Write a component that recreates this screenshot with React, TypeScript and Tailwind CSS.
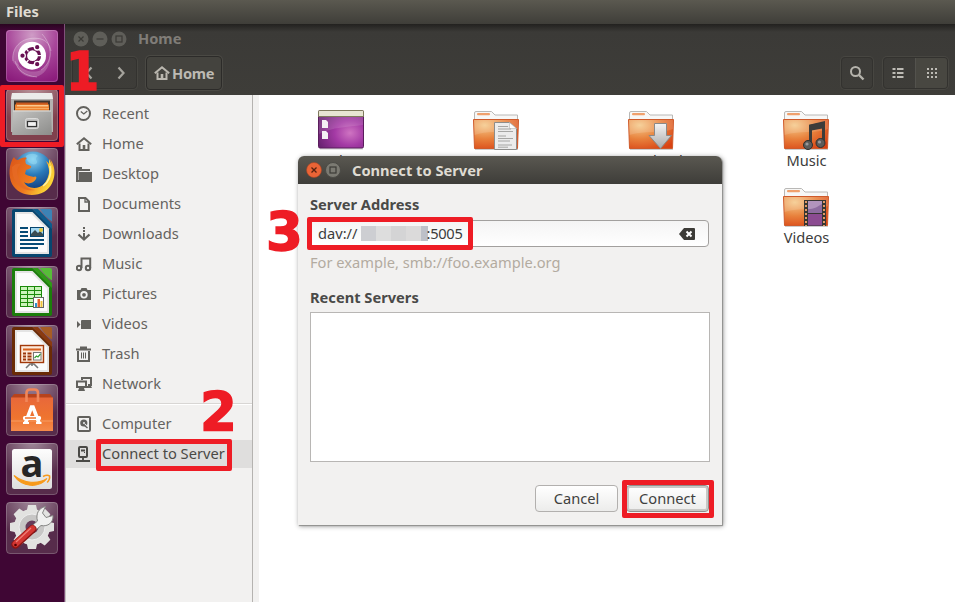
import type { ReactNode } from "react";

const ICON = "#62615d";

/* ---------- Launcher ---------- */

function Tile({ tint, children }: { tint: string; children: ReactNode }) {
  return (
    <div className={`relative h-[52px] w-[52px] shrink-0 overflow-hidden rounded-[4px] ${tint}`}>
      <svg viewBox="0 0 52 52" className="block h-[52px] w-[52px]">
        <defs>
          <radialGradient id="gloss" cx="0.5" cy="-0.05" r="0.75">
            <stop offset="0" stopColor="#fff" stopOpacity="0.45" />
            <stop offset="1" stopColor="#fff" stopOpacity="0" />
          </radialGradient>
        </defs>
        <rect width="52" height="52" fill="url(#gloss)" />
        {children}
        <rect x="0.5" y="0.5" width="51" height="51" rx="3.5" fill="none" stroke="#fff" strokeOpacity="0.2" />
      </svg>
    </div>
  );
}

function UbuntuLogo() {
  return (
    <g>
      <defs>
        <radialGradient id="dash" cx="0.5" cy="0.1" r="0.95">
          <stop offset="0" stopColor="#cf9cc6" />
          <stop offset="0.5" stopColor="#a8479a" />
          <stop offset="1" stopColor="#8b1c7c" />
        </radialGradient>
      </defs>
      <rect width="52" height="52" fill="url(#dash)" />
      <path d="M36 4c11 12 11 28-1 36-9 4-20 0-25-8C11 43 20 48 30 47 46 43 50 18 36 4Z" fill="#fff" opacity="0.2" />
      <path d="M7 32C5 17 16 5 36 9c-11 0-20 5-23 14-1 5-1 9 0 13-3-1-5-2-6-4Z" fill="#fff" opacity="0.16" />
      <g fill="none" stroke="#fff" strokeOpacity="0.3">
        <path d="M7 31C5 16 18 5 35 9c6 2 9 6 10 12" />
        <path d="M36 4c11 12 11 28-1 36" />
        <path d="M9 31c2 9 10 15 22 16" />
      </g>
      <circle cx="26" cy="25.7" r="14" fill="#fff" />
      <circle cx="26.500" cy="25.700" r="7" fill="none" stroke="#681052" strokeWidth="3.200" />
      <g fill="#681052" stroke="#fff" strokeWidth="1.300">
        <circle cx="16.500" cy="25.700" r="2.800" />
        <circle cx="31.200" cy="17.200" r="2.800" />
        <circle cx="31.200" cy="34.200" r="2.800" />
      </g>
      <path d="m22.500 21.500-3.500-4M22.500 30l-3.500 4M31 25.700h5" stroke="#fff" strokeWidth="1.200" />
    </g>
  );
}

function Cabinet() {
  return (
    <g>
      <defs>
        <linearGradient id="drawer" x1="0" y1="0" x2="1" y2="1">
          <stop offset="0" stopColor="#c4c4c2" />
          <stop offset="1" stopColor="#8c8c8a" />
        </linearGradient>
      </defs>
      <path d="M6 4h40l1 7v32H5V11Z" fill="#b5b3b1" />
      <path d="M6 4h40l1 6H5Z" fill="#ebebea" />
      <rect x="8" y="11.500" width="36" height="11" fill="#3e342e" />
      <rect x="10" y="13.500" width="32" height="4" fill="#c7571d" />
      <rect x="9" y="15.500" width="34" height="7" fill="#ee8330" />
      <path d="M11 16.800h31" stroke="#ffe5b9" />
      <path d="M10 19.500h33" stroke="#f7ac62" />
      <path d="M7 21.500h38l1 24.500H6Z" fill="url(#drawer)" />
      <path d="M7 22h38" stroke="#dededc" />
      <rect x="19.5" y="29.5" width="13" height="10" rx="2" fill="#c3c3c2" stroke="#dadad9" />
      <rect x="21.5" y="32.500" width="9" height="5" fill="#f2f2f2" stroke="#333" strokeWidth="1.2" />
    </g>
  );
}

function Firefox() {
  return (
    <g>
      <defs>
        <radialGradient id="globe" cx="0.5" cy="0.2" r="0.8">
          <stop offset="0" stopColor="#8dd6f4" />
          <stop offset="0.5" stopColor="#2879b9" />
          <stop offset="1" stopColor="#133a79" />
        </radialGradient>
        <linearGradient id="fox" x1="0" y1="0" x2="1" y2="0.5">
          <stop offset="0" stopColor="#d95319" />
          <stop offset="0.6" stopColor="#ef7b1f" />
          <stop offset="1" stopColor="#fbd536" />
        </linearGradient>
      </defs>
      <circle cx="27" cy="23" r="19.500" fill="url(#globe)" />
      <path d="M20 8c4-3 9-3 12 0-2 1-3 3-1 5 1 3-3 4-5 3-3-1-6-4-6-8Z" fill="#93d9f3" opacity="0.55" />
      <path
        d="M8 9c1 2 2 3 4 3 3-2 6-3 9-2-2 1-2 3-1 6l5 2c1 2-2 3-5 4l-1 4c3 2 6 2 9 3 2-1 3 0 2 2-2 4-8 6-12 3 3 7 14 8 20 2 6-5 7-14 2-23 3 2 4 4 5 7 1-4 0-6-1-9 8 10 5 27-6 33-11 6-26 3-32-8C2 28 3 15 8 9Z"
        fill="url(#fox)"
      />
      <path d="M40 12c5 8 4 18-3 25 9-4 12-14 8-22l-2-4v6Z" fill="#fbd43e" />
      <path d="M44 18c2 8-1 16-7 20" fill="none" stroke="#fff0a0" strokeWidth="1.5" />
      <path d="M6 19c3-3 6-4 9-3-4 3-5 8-3 12 2 8 9 13 17 14-12 2-23-6-23-23Z" fill="#e66a26" opacity="0.8" />
    </g>
  );
}

function OfficeDoc({ dark, mid, light, children }: { dark: string; mid: string; light: string; children: ReactNode }) {
  return (
    <g>
      <path d="M8 2h18.500L46 21.500V48a2 2 0 0 1-2 2H8a2 2 0 0 1-2-2V4a2 2 0 0 1 2-2Z" fill={dark} />
      <path d="M26.500 2H32l14 15v5Z" fill={mid} />
      <path d="M34 2h10a2 2 0 0 1 2 2v10.500Q39 10 34 2Z" fill={light} />
      <path d="M9 5h17.500L43 21.500V47H9Z" fill="#e4e4e4" />
      <path d="M11 7h14.500L41 22.500V45H11Z" fill="#fbfbfb" />
      {children}
    </g>
  );
}

function WriterIcon() {
  return (
    <OfficeDoc dark="#07466f" mid="#0c5c8d" light="#3c83b5">
      <path d="M14 21h8M14 25h8M14 29h8M14 33h24M14 37h24M14 41h18" stroke="#064a75" strokeWidth="2" />
      <rect x="24.5" y="20.5" width="13" height="9" fill="#a4d8f2" stroke="#07466f" />
      <path d="M25 29v-2l4-4 3 3 2-2 3 3v2Z" fill="#3a4c52" />
      <circle cx="35" cy="23" r="2" fill="#e7c93d" />
    </OfficeDoc>
  );
}

function CalcIcon() {
  return (
    <OfficeDoc dark="#1b7d0b" mid="#2f9a17" light="#57bd38">
      <rect x="14" y="20" width="22" height="21" fill="#1b8a0a" />
      <g fill="#cbf4bb">
        {[21, 25, 29, 33, 37].map((y) => (
          <g key={y}>
            <rect x="15" y={y} width="6" height="3" />
            <rect x="22" y={y} width="6" height="3" />
            <rect x="29" y={y} width="6" height="3" />
          </g>
        ))}
      </g>
      <rect x="27.5" y="31.5" width="10" height="10" fill="#fff" stroke="#666" />
      <rect x="29" y="37" width="2" height="4" fill="#2e8fc9" />
      <rect x="31.500" y="33" width="2.500" height="8" fill="#e5602a" />
      <rect x="34.500" y="35" width="2" height="6" fill="#eec339" />
    </OfficeDoc>
  );
}

function ImpressIcon() {
  return (
    <OfficeDoc dark="#6a2b06" mid="#8a3a10" light="#a75d24">
      <path d="M26 38v3m-6 2 4-4h4l4 4" fill="none" stroke="#777" strokeWidth="1.6" />
      <rect x="14.5" y="20.500" width="23" height="17" fill="#fde9d9" stroke="#a2390a" strokeWidth="1.4" />
      <path d="M17 24.500h18" stroke="#d8611f" strokeWidth="2" />
      <path d="M17 28.500h3M17 31.500h3M17 34.500h3M21.500 28.500h4M21.500 31.500h4M21.500 34.500h4" stroke="#9b370b" strokeWidth="2" />
      <rect x="27.500" y="27.500" width="7.500" height="7.500" fill="#fff" stroke="#777" />
      <path d="m28.500 33 2-2 1.500 1 2.500-3" fill="none" stroke="#35a033" strokeWidth="1.200" />
    </OfficeDoc>
  );
}

function SoftwareIcon() {
  return (
    <g>
      <defs>
        <linearGradient id="bag" x1="0" y1="0" x2="0" y2="1">
          <stop offset="0" stopColor="#e8683a" />
          <stop offset="0.6" stopColor="#ef742f" />
          <stop offset="1" stopColor="#f58a4b" />
        </linearGradient>
      </defs>
      <path d="M8 10h36l3 4H5Z" fill="#b7431c" />
      <path d="M5 13.500h42V47H5Z" fill="url(#bag)" />
      <path d="M5 37h42" stroke="#f79e65" />
      <path d="M20.500 18v-9q0-3.500 3.500-3.500h4.500q3.500 0 3.500 3.500v9" fill="none" stroke="#f0875a" strokeWidth="2.600" />
      <path d="m19.500 39 6-16h1.500l6 16" fill="none" stroke="#fff" strokeWidth="3.600" />
      <rect x="17" y="32" width="18" height="4" rx="1.500" fill="#fff" />
      <path d="M19 34h11" stroke="#ef742f" strokeWidth="1.300" />
      <path d="M17 39h6M30 39h5.500" stroke="#fff" strokeWidth="2" />
    </g>
  );
}

function AmazonIcon() {
  return (
    <g>
      <defs>
        <linearGradient id="plate" x1="0" y1="0" x2="0" y2="1">
          <stop offset="0" stopColor="#fdfdfd" />
          <stop offset="1" stopColor="#dedede" />
        </linearGradient>
      </defs>
      <rect x="6" y="6" width="40" height="40" rx="2.500" fill="url(#plate)" />
      <text x="26" y="34" textAnchor="middle" fontFamily="Open Sans, sans-serif" fontWeight="700" fontSize="38" fill="#262626">
        a
      </text>
      <path d="M8 32.500c10 8 24 9 33 3-8 10-25 9-33-3Z" fill="#f79a1c" stroke="#f79a1c" strokeWidth="1.200" />
      <path d="M37 33.500c2-1 5-1.500 6.500-.6.600 2-1 5-2.300 6.500" fill="none" stroke="#f79a1c" strokeWidth="1.600" />
    </g>
  );
}

function SettingsIcon() {
  const teeth = [0, 45, 90, 135, 180, 225, 270, 315];
  return (
    <g>
      <g fill="#e2e2e0">
        {teeth.map((a) => (
          <path key={a} d="M20.500 10 22 3h8l1.500 7Z" transform={`rotate(${a} 26 25)`} />
        ))}
        <circle cx="26" cy="25" r="18" />
      </g>
      <circle cx="26" cy="25" r="13" fill="#c7c6c5" stroke="#eee" />
      <circle cx="26" cy="25" r="6.500" fill="#663a59" />
      <path
        d="M24 25.500 31.500 19c-2-7 1-13 8-14.500l-3 6.500 3.500 4.500 7-2c.5 7-5 11.500-12 10L27.500 30Z"
        fill="#f0f0ef"
        stroke="#858583"
      />
      <path d="M9.500 42.500 26.500 27" stroke="#8c1513" strokeWidth="8" strokeLinecap="round" />
      <path d="M9.500 42 26.500 26.500" stroke="#d33632" strokeWidth="6" strokeLinecap="round" />
      <path d="M10 40 25 26" stroke="#f08078" strokeWidth="1.200" />
      <circle cx="9.500" cy="43" r="1.300" fill="#500" />
    </g>
  );
}

function Launcher() {
  const grey = "bg-[#572c4b]";
  return (
    <nav className="flex w-[65px] shrink-0 flex-col gap-[7px] border-r border-[#80507a] bg-[linear-gradient(#2a0520,#3f0634_6px)] pt-[6px] pl-[6px]">
      <Tile tint="bg-[#8b1c7c]"><UbuntuLogo /></Tile>
      <Tile tint="bg-[#80404d]"><Cabinet /></Tile>
      <Tile tint={grey}><Firefox /></Tile>
      <Tile tint={grey}><WriterIcon /></Tile>
      <Tile tint={grey}><CalcIcon /></Tile>
      <Tile tint={grey}><ImpressIcon /></Tile>
      <Tile tint={grey}><SoftwareIcon /></Tile>
      <Tile tint={grey}><AmazonIcon /></Tile>
      <Tile tint={grey}><SettingsIcon /></Tile>
    </nav>
  );
}

/* ---------- Places sidebar ---------- */

const HousePath = () => (
  <>
    <path d="m.8 8.300 7.200-6 7.200 6" strokeWidth="2" />
    <path d="M3.500 7.500V14h9V7.500" strokeWidth="2" />
    <path d="M8 9v5" strokeWidth="2.600" />
  </>
);

const glyphs: Record<string, ReactNode> = {
  Recent: (
    <>
      <circle cx="7.500" cy="7.500" r="6.500" strokeWidth="2" />
      <path d="m4.800 5.500 3 2.500 3.500-3" strokeWidth="1.300" />
    </>
  ),
  Home: <HousePath />,
  Desktop: (
    <>
      <path d="M0 1h6v2h8v2H2.500v10H0Z" fill={ICON} stroke="none" />
      <path d="M3 6h13v10H3Z" fill={ICON} stroke="none" />
      <path d="M0 14h3v2H0Z" fill={ICON} stroke="none" />
    </>
  ),
  Documents: (
    <>
      <path d="M3 2h6.500L13 5.500V15H3Z" strokeWidth="2" />
      <path d="M9 2v4h4" strokeWidth="1.300" />
    </>
  ),
  Downloads: (
    <>
      <path d="M8 1v2M8 4v2M8 7v6" strokeWidth="2" />
      <path d="m2.500 8.500 5.500 5 5.500-5" strokeWidth="2.300" />
    </>
  ),
  Music: (
    <>
      <circle cx="3" cy="12" r="2.200" strokeWidth="2" />
      <circle cx="12" cy="12" r="2.200" strokeWidth="2" />
      <path d="M5.500 12V2.500h8.700V12" strokeWidth="2" />
    </>
  ),
  Pictures: (
    <>
      <path d="M1 4h3.500l1-2h5l1 2H15v10H1Z" fill={ICON} stroke="none" />
      <circle cx="8" cy="8.800" r="2.800" stroke="#f2f1f0" strokeWidth="1.800" />
    </>
  ),
  Videos: (
    <>
      <path d="M5 4.500 6 4h9v9H5Z" fill={ICON} stroke="none" />
      <path d="M1 5v7l3.500-3.500Z" fill={ICON} stroke="none" />
    </>
  ),
  Trash: (
    <>
      <path d="M0 3.500h15M4 1.500h7" strokeWidth="1.800" />
      <path d="M2 5v10h11V5" strokeWidth="2" />
      <path d="M5.500 6.500v6M7.500 6.500v6M9.500 6.500v6" strokeWidth="1" />
    </>
  ),
  Network: (
    <>
      <path d="M6 4V2h9v7h-3" strokeWidth="2" />
      <path d="M1 5.500h9v5.500H1Z" strokeWidth="2" />
      <path d="M2 15h7l-1-3H3ZM11 12h5l-1-2h-4Z" fill={ICON} stroke="none" />
    </>
  ),
  Computer: (
    <>
      <rect x="2" y="1" width="12" height="14" rx="1" strokeWidth="2" />
      <circle cx="7.800" cy="7" r="3.600" fill={ICON} stroke="none" />
      <circle cx="8" cy="7" r="1" fill="#f2f1f0" stroke="none" />
      <path d="m9 8 3 4" stroke="#f2f1f0" strokeWidth="1.200" />
      <path d="m8 9 3.500 3" strokeWidth="1.400" />
    </>
  ),
  "Connect to Server": (
    <g stroke="#4a4946">
      <rect x="3" y="1" width="8" height="10" rx="1" strokeWidth="2" />
      <path d="M5 4.500h4M7 12v3M0 15h14" strokeWidth="1.800" />
      <path d="M8 6.500h1" strokeWidth="1" />
    </g>
  ),
};

function Place({ name, active }: { name: string; active?: boolean }) {
  return (
    <li className="flex h-[30px] items-center">
      <div className={`flex h-7 w-full items-center gap-[10px] pl-[10px] ${active ? "bg-[#dfdedd] text-[#4a4945]" : "text-[#65635f]"}`}>
        <svg viewBox="0 0 16 16" fill="none" stroke={ICON} className="h-4 w-4 shrink-0">
          {glyphs[name]}
        </svg>
        <span className="self-start leading-[26px] whitespace-nowrap">{name}</span>
      </div>
    </li>
  );
}

function Sidebar() {
  const user = ["Recent", "Home", "Desktop", "Documents", "Downloads", "Music", "Pictures", "Videos", "Trash", "Network"];
  return (
    <aside className="w-[188px] shrink-0 border-r border-l border-r-[#b5b3b0] border-l-[#c4c2c0] bg-[#f2f1f0] pt-1">
      <ul>{user.map((n) => <Place key={n} name={n} />)}</ul>
      <div className="mt-1 mb-1 h-[2px] border-t border-[#d8d6d4] bg-white" />
      <ul>
        <Place name="Computer" />
        <Place name="Connect to Server" active />
      </ul>
    </aside>
  );
}

/* ---------- File grid ---------- */

function Folder({ children }: { children: ReactNode }) {
  return (
    <svg viewBox="0 0 48 48" className="h-12 w-12">
      <defs>
        <radialGradient id="folder" cx="0.25" cy="0.2" r="0.95">
          <stop offset="0" stopColor="#f5c98a" />
          <stop offset="0.5" stopColor="#e8813c" />
          <stop offset="1" stopColor="#d84213" />
        </radialGradient>
        <linearGradient id="metal" x1="0" y1="0" x2="0" y2="1">
          <stop offset="0" stopColor="#f4f4f4" />
          <stop offset="1" stopColor="#a9a9a9" />
        </linearGradient>
      </defs>
      <path d="M2.500 14V6q0-1.500 1.500-1.500h15.500L23 8h22.500v6Z" fill="#f7f7f6" stroke="#b9b8b6" />
      <rect x="5" y="6" width="13" height="2.200" rx="1" fill="#f0a06c" />
      <path d="M1.500 12.500h45l-1 29h-43Z" fill="url(#folder)" stroke="#cf5a2b" />
      <path d="M2 13h44v9c-12 5-28 1-43.500 6Z" fill="#fff" opacity="0.14" />
      <path d="M3 42.500h43" stroke="#000" strokeOpacity="0.2" />
      {children}
    </svg>
  );
}

const DesktopThumb = () => (
  <svg viewBox="0 0 48 48" className="h-12 w-12">
    <defs>
      <radialGradient id="wall" cx="0.7" cy="0.6" r="0.75">
        <stop offset="0" stopColor="#cf74c2" />
        <stop offset="0.45" stopColor="#a43aa5" />
        <stop offset="1" stopColor="#6a2372" />
      </radialGradient>
    </defs>
    <rect x="1.500" y="3.500" width="45" height="37.500" rx="1.500" fill="url(#wall)" stroke="#5a1d5c" />
    <path d="M2 10h44v8C30 20 16 20 2 27Z" fill="#fff" opacity="0.12" />
    <path d="M1.500 4.500q0-1 1-1h43q1 0 1 1v5h-45Z" fill="#e7e4d2" stroke="#7e7a5c" />
    <path d="M5 13h4l2 2v6H5ZM5 24h4l2 2v6H5Z" fill="#f4f1f4" />
    <path d="M3 42h43" stroke="#000" strokeOpacity="0.2" />
  </svg>
);

const DocumentsThumb = () => (
  <Folder>
    <path d="M22.500 15.500h15l7 6v21h-22Z" fill="#ececec" stroke="#8d8d8b" />
    <path d="m37.500 15.500 0 6h7Z" fill="#fff" stroke="#b5b5b3" strokeWidth="0.600" />
    <path d="M26 19.500h10M26 22h13M26 24.500h15M26 29h8M26 31.500h15M26 34h12M26 38h14M26 40.200h10" stroke="#9e9e9c" strokeWidth="0.900" />
  </Folder>
);

const DownloadsThumb = () => (
  <Folder>
    <path d="M27.500 16.500h12v12h5L33.500 41.500 22 28.500h5.500Z" fill="url(#metal)" stroke="#8b8987" />
  </Folder>
);

const MusicThumb = () => (
  <Folder>
    <path d="M28.500 38V19L41.500 16v19" fill="none" stroke="#3d3c3a" strokeWidth="3" />
    <path d="M27 18 43 15v6l-16 3Z" fill="#3d3c3a" />
    <circle cx="26" cy="38" r="4.500" fill="#5c5b59" stroke="#30302e" />
    <circle cx="38.500" cy="36" r="4.500" fill="#5c5b59" stroke="#30302e" />
    <circle cx="25" cy="37" r="1.600" fill="#999" />
    <circle cx="37.500" cy="35" r="1.600" fill="#999" />
  </Folder>
);

const VideosThumb = () => (
  <Folder>
    <rect x="22" y="16" width="22" height="26" fill="#373632" />
    <rect x="26" y="17" width="14" height="12" fill="#b294bd" />
    <rect x="26" y="30" width="14" height="11.500" fill="#8b4b91" />
    <path d="M26 29v-4c6 0 9-2 14-5v9Z" fill="#76518c" opacity="0.6" />
    <path d="M24 17v25M42 17v25" stroke="#e39a66" strokeWidth="2" strokeDasharray="2 2" />
  </Folder>
);

function Item({ label, thumb }: { label: string; thumb: ReactNode }) {
  return (
    <div className="flex h-[77px] w-[155px] flex-col items-center">
      {thumb}
      <span className="-mt-[5px] pl-[2px] leading-5 text-[#3c3c3c]">{label}</span>
    </div>
  );
}

function FileGrid() {
  return (
    <main className="flex flex-1 border-l-[6px] border-[#f2f1f0] bg-white pt-3 pl-1">
      <div className="grid h-fit grid-cols-[155px_155px_155px_155px]">
        <Item label="Desktop" thumb={<DesktopThumb />} />
        <Item label="Documents" thumb={<DocumentsThumb />} />
        <Item label="Downloads" thumb={<DownloadsThumb />} />
        <Item label="Music" thumb={<MusicThumb />} />
        <div className="col-start-4">
          <Item label="Videos" thumb={<VideosThumb />} />
        </div>
      </div>
    </main>
  );
}

/* ---------- Window header ---------- */

function WindowDot({ kind }: { kind: "close" | "min" | "max" }) {
  return (
    <svg viewBox="0 0 16 16" className="h-4 w-4" fill="none" stroke="#3b3a36" strokeWidth="1.200">
      <circle cx="8" cy="8" r="7.500" fill="#5f5e59" stroke="none" />
      {kind === "close" && <path d="m5.500 5.500 5 5m0-5-5 5" />}
      {kind === "min" && <path d="M4.500 8h7" />}
      {kind === "max" && <rect x="5" y="5" width="6" height="6" />}
    </svg>
  );
}

function Header() {
  const box = "flex items-center rounded-[4px] border border-[#33322f] shadow-[0_0_0_1px_#474641]";
  return (
    <header className="flex h-[71px] flex-col bg-[linear-gradient(#22211f,#3b3a37_8px,#3e3d39)]">
      <div className="flex h-7 items-center gap-[3px] pt-[1px] pl-[7.500px]">
        <WindowDot kind="close" />
        <WindowDot kind="min" />
        <WindowDot kind="max" />
        <span className="pb-[2px] pl-[8.500px] font-bold text-[#807d78]">Home</span>
      </div>
      <div className="flex h-[43px] items-center pr-[7px] pb-[1px] pl-[7px]">
        <div className={`${box} h-8 w-[65px] justify-between pr-[7px] pl-2`}>
          <svg viewBox="0 0 16 16" className="h-4 w-4" fill="none" stroke="#a5a39d" strokeWidth="2.200"><path d="M10.500 2.500 5.500 8l5 5.500" /></svg>
          <svg viewBox="0 0 16 16" className="h-4 w-4" fill="none" stroke="#a5a39d" strokeWidth="2.200"><path d="m5.500 2.500 5 5.500-5 5.500" /></svg>
        </div>
        <div className="ml-[9px] flex h-[34px] w-[76px] items-center gap-[2px] rounded-[4px] border border-[#2c2b29] bg-[#44433e] pl-[7px] shadow-[0_0_0_1px_#4a4944]">
          <svg viewBox="0 0 16 16" className="h-4 w-4" fill="none" stroke="#bbb8b0"><HousePath /></svg>
          <span className="font-bold tracking-[-0.3px] text-[#bdbab3]">Home</span>
        </div>
        <div className={`${box} ml-auto h-8 w-8 justify-center`}>
          <svg viewBox="0 0 16 16" className="h-4 w-4" fill="none" stroke="#b5b3ac"><circle cx="6.500" cy="6.500" r="4.500" strokeWidth="2" /><path d="m10 10 4.500 4.500" strokeWidth="2.400" /></svg>
        </div>
        <div className={`${box} ml-[10px] h-8 w-[65px] overflow-hidden`}>
          <div className="flex h-full w-8 items-center justify-center border-r border-[#53524d]">
            <svg viewBox="0 0 12 10" className="ml-[-3px] h-[10px] w-3" fill="#bdbbb5">
              {[0, 4, 8].map((y) => <path key={y} d={`M0.500 ${y}h3v2h-3ZM5 ${y}h6.500v2H5Z`} />)}
            </svg>
          </div>
          <div className="flex h-full flex-1 items-center justify-center bg-[#484741]">
            <svg viewBox="0 0 10 10" className="h-[10px] w-[10px]" fill="#bdbbb5">
              {[0, 4, 8].map((y) => <path key={y} d={`M0 ${y}h2v2H0ZM4 ${y}h2v2H4ZM8 ${y}h2v2H8Z`} />)}
            </svg>
          </div>
        </div>
      </div>
    </header>
  );
}

/* ---------- Connect dialog ---------- */

function Dialog() {
  const button = "flex h-[27px] w-[83px] items-center justify-center rounded-[4px] border bg-gradient-to-b from-white to-[#ececeb] pb-[2px] text-[#3f3f3e]";
  return (
    <section className="absolute top-[156px] left-[298px] flex h-[369px] w-[424px] flex-col rounded-t-[6px] bg-[#f2f1f0] text-[#4a4a48] shadow-[1px_1px_1px_#8f8f8d,1px_1px_5px_rgba(0,0,0,0.45)]">
      <div className="flex h-7 items-center gap-[3px] rounded-t-[6px] bg-gradient-to-b from-[#5a5851] to-[#3e3d39] pl-[7.500px]">
        <svg viewBox="0 0 16 16" className="h-4 w-4" fill="none"><circle cx="8" cy="8" r="7.500" fill="#ea6436" stroke="#a54526" strokeWidth="0.600" /><path d="m5.500 5.500 5 5m0-5-5 5" stroke="#56210f" strokeWidth="1.300" /></svg>
        <svg viewBox="0 0 16 16" className="h-4 w-4" fill="none"><circle cx="8" cy="8" r="7.500" fill="#7b7a72" stroke="#4c4b46" /><rect x="5" y="5" width="6" height="6" stroke="#3b3a36" strokeWidth="1.200" /></svg>
        <h2 className="pl-[8.500px] font-bold text-[#dfdbd2]">Connect to Server</h2>
      </div>
      <div className="flex flex-1 flex-col px-3">
        <label className="mt-[10px] h-5 leading-5 font-bold">Server Address</label>
        <div className="mt-[6px] mr-px -ml-px flex h-[27px] items-center rounded-[4px] border border-[#a2a09e] bg-gradient-to-b from-[#f4f4f4] to-white pr-[13px] pl-[8px] text-[#3c3c3c]">
          <span className="pb-[2px]">dav://</span>
          <span className="ml-[3px] h-[15px] w-[67px] bg-[linear-gradient(90deg,#cdced2_15px,#dddddd_15px,#dddddd_30px,#d4d4d5_30px,#d4d4d5_45px,#dbdada_45px,#dbdada_60px,#bdc0c8_60px)]" />
          <span className="-ml-px pb-[2px] tracking-[-0.300px]">:5005</span>
          <svg viewBox="0 0 16 12" className="ml-auto h-3 w-4"><path d="M0 6 5 0h10q1 0 1 1v10q0 1-1 1H5Z" fill="#3c3b37" /><path d="m7.500 3.500 5 5m0-5-5 5" stroke="#fff" strokeWidth="2" /></svg>
        </div>
        <p className="mt-[5px] h-5 leading-5 text-[#b3aba0]">For example, smb://foo.example.org</p>
        <h3 className="mt-[15px] h-5 leading-5 font-bold">Recent Servers</h3>
        <div className="mt-[5px] h-[150px] border border-[#b8b6b4] bg-white" />
        <div className="mt-[23px] flex justify-end gap-2 pr-px">
          <button className={`${button} border-[#b2b0ae]`}>Cancel</button>
          <button className={`${button} border-[#8f8e8c] shadow-[inset_0_0_0_2px_#c9c8c6]`}>Connect</button>
        </div>
      </div>
    </section>
  );
}

/* ---------- Annotations ---------- */

function Annotations() {
  const frame = "absolute rounded-[2px] border-[5px] border-[#ee1c25]";
  const digit = "absolute font-['DejaVu_Sans'] text-[53px] leading-[54px] font-bold text-[#ee1c25] [-webkit-text-stroke:1.5px_#ee1c25]";
  return (
    <>
      <div className={`${frame} top-[85px] left-0 h-[62px] w-16`} />
      <div className={`${frame} top-[439px] left-[96px] h-8 w-[136px]`} />
      <div className={`${frame} top-[217px] left-[307px] h-[33px] w-[166px]`} />
      <div className={`${frame} top-[480px] left-[622px] h-[38px] w-[92px]`} />
      <span className={`${digit} top-[45px] left-[66px] origin-left scale-x-90`}>1</span>
      <span className={`${digit} top-[385px] left-[200px]`}>2</span>
      <span className={`${digit} top-[205px] left-[266px]`}>3</span>
    </>
  );
}

export default function App() {
  return (
    <div className="relative flex h-[602px] w-[955px] flex-col overflow-hidden bg-white font-['Noto_Sans',sans-serif] text-[14.67px]">
      <div className="flex h-6 shrink-0 items-center bg-gradient-to-b from-[#5b5950] to-[#3f3e39] pb-[2px] pl-[6px] font-bold text-[#dfdbd2]">Files</div>
      <div className="flex min-h-0 flex-1">
        <Launcher />
        <div className="flex min-w-0 flex-1 flex-col">
          <Header />
          <div className="flex min-h-0 flex-1">
            <Sidebar />
            <FileGrid />
          </div>
        </div>
      </div>
      <Dialog />
      <Annotations />
    </div>
  );
}
